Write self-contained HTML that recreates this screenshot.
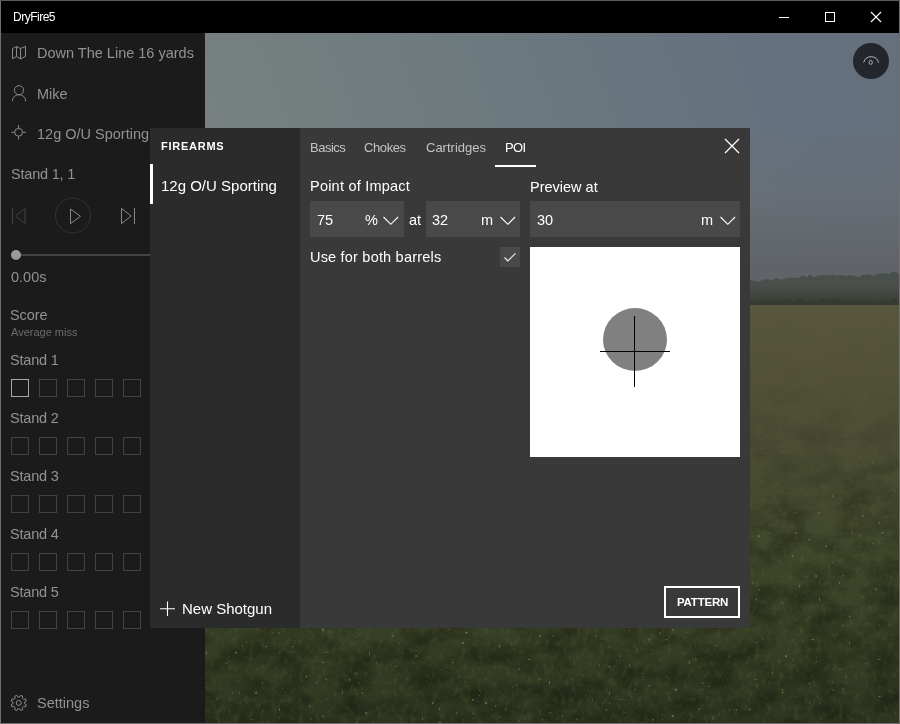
<!DOCTYPE html>
<html><head><meta charset="utf-8">
<style>
*{box-sizing:border-box;margin:0;padding:0}
html,body{width:900px;height:724px;overflow:hidden;background:#6e6e6e}
body{position:relative;font-family:"Liberation Sans",sans-serif;color:#fff}
.a{position:absolute}
.t{position:absolute;white-space:nowrap;line-height:1;will-change:transform}
.sb{color:#929292;font-size:14.5px}
.box{position:absolute;width:18px;height:18px;border:1px solid #424242}
.tab{position:absolute;top:141px;font-size:13px;color:#c4c4c4}
.inp{position:absolute;top:201px;height:36px;background:#494949}
svg{position:absolute;overflow:visible}
</style></head><body>
<!-- window frame -->
<div class="a" style="left:0;top:0;width:900px;height:724px;background:#707070"></div>
<div class="a" style="left:0;top:0;width:900px;height:1px;background:#5a5a5a"></div>
<!-- photo -->
<div class="a" id="photo" style="left:205px;top:33px;width:694px;height:690px;overflow:hidden">
  <div class="a" style="left:0;top:0;width:694px;height:272px;background:linear-gradient(70deg,#7a8381 0%,#778080 12%,#6c797e 47%,#64707e 85%,#65707c 100%)"></div>
  <div class="a" style="left:0;top:0;width:694px;height:272px;background:linear-gradient(to bottom,rgba(110,114,118,0) 95px,rgba(104,108,112,.55) 160px,rgba(96,100,104,1) 235px)"></div>
  <svg width="694" height="80" style="left:0;top:202px" viewBox="0 0 694 80">
    <defs><filter id="tb" x="-5%" y="-20%" width="110%" height="140%"><feGaussianBlur stdDeviation="0.7"/></filter><linearGradient id="tg" x1="0" y1="0" x2="0" y2="1"><stop offset="0.4" stop-color="#4a4f4b"/><stop offset="0.7" stop-color="#3f443c"/><stop offset="0.9" stop-color="#383d33"/><stop offset="1" stop-color="#40443a"/></linearGradient></defs>
    <path d="M0,72 L0,48 L540,47 Q546.6,43.4 553.2,47.2 Q560.0,42.4 566.7,45.6 Q571.2,41.5 575.6,44.7 Q585.0,41.5 594.3,43.0 Q598.1,38.3 601.8,42.5 Q605.1,37.1 608.5,42.3 Q616.7,38.0 624.9,40.8 Q628.0,38.4 631.2,40.8 Q635.7,39.3 640.2,40.9 Q646.9,38.9 653.6,42.2 Q660.8,37.3 667.9,40.7 Q676.2,36.3 684.5,38.9 Q689.3,34.0 694.0,39.0 L694,72 Z" fill="url(#tg)" filter="url(#tb)"/>
    <path d="M540,72 L540,66 Q545.3,63.7 550.6,67.6 Q557.3,63.7 564.1,67.8 Q566.7,62.3 569.3,67.9 Q574.8,64.5 580.2,66.2 Q584.8,61.2 589.4,67.1 Q594.5,60.1 599.6,66.4 Q603.3,64.6 607.1,67.5 Q610.3,64.0 613.5,66.3 Q618.8,60.6 624.1,66.0 Q630.5,61.0 636.9,66.4 Q643.8,64.4 650.8,66.6 Q657.6,62.7 664.4,67.4 Q667.8,64.7 671.3,67.4 Q678.1,64.5 685.0,66.6 Q689.1,60.8 693.2,66.3 Q693.6,61.5 694.0,67.2 L694,72 Z" fill="#343830" opacity="0.7" filter="url(#tb)"/>
  </svg>
  <div class="a" style="left:0;top:272px;width:694px;height:418px;background:linear-gradient(to bottom,#58573d 0px,#535239 75px,#4c4d34 135px,#454a2f 195px,#3e462a 255px,#353e24 345px,#2d3520 418px)"></div>
  <svg width="694" height="419" style="left:0;top:272px">
    <defs>
      <filter id="gr" x="0" y="0" width="100%" height="100%" color-interpolation-filters="sRGB">
        <feTurbulence type="fractalNoise" baseFrequency="0.03 0.05" numOctaves="4" seed="4"/>
        <feColorMatrix type="matrix" values="0 0 0 0 0.1  0 0 0 0 0.11  0 0 0 0 0.06  -2.5 0 0 0 1.6"/>
      </filter>
      <filter id="bl" x="0" y="0" width="100%" height="100%" color-interpolation-filters="sRGB">
        <feTurbulence type="fractalNoise" baseFrequency="0.18 0.12" numOctaves="3" seed="7"/>
        <feColorMatrix type="matrix" values="0 0 0 0 0.42  0 0 0 0 0.5  0 0 0 0 0.26  3.5 0 0 0 -1.8"/>
      </filter>
      <filter id="sp" x="0" y="0" width="100%" height="100%" color-interpolation-filters="sRGB">
        <feTurbulence type="fractalNoise" baseFrequency="0.3" numOctaves="1" seed="9"/>
        <feColorMatrix type="matrix" values="0 0 0 0 0.75  0 0 0 0 0.76  0 0 0 0 0.6  14 0 0 0 -9.9"/>
      </filter>
      <linearGradient id="fm" x1="0" y1="0" x2="0" y2="1"><stop offset="0" stop-color="#fff" stop-opacity="0"/><stop offset="0.25" stop-color="#fff" stop-opacity="0.12"/><stop offset="0.55" stop-color="#fff" stop-opacity="0.65"/><stop offset="1" stop-color="#fff" stop-opacity="1"/></linearGradient>
      <mask id="mk"><rect width="694" height="419" fill="url(#fm)"/></mask>
    </defs>
    <g mask="url(#mk)">
      <rect width="694" height="419" filter="url(#gr)" opacity="0.62"/>
      <rect width="694" height="419" filter="url(#bl)" opacity="0.18"/>
      <rect width="694" height="419" filter="url(#sp)" opacity="0.4"/>
    </g>
  </svg>
</div>
<!-- title bar -->
<div class="a" style="left:1px;top:1px;width:898px;height:32px;background:#000"></div>
<div class="t" style="left:13px;top:11px;font-size:12px;color:#fff;letter-spacing:-0.5px">DryFire5</div>
<div class="a" style="left:779px;top:17px;width:10px;height:1px;background:#fff"></div>
<div class="a" style="left:825px;top:12px;width:10px;height:10px;border:1px solid #fff"></div>
<svg width="12" height="12" style="left:870px;top:11px" viewBox="0 0 12 12"><path d="M1,1 L11,11 M11,1 L1,11" stroke="#fff" stroke-width="1.1"/></svg>
<!-- round button -->
<div class="a" style="left:853px;top:43px;width:36px;height:36px;border-radius:50%;background:#23262c"></div>
<svg width="36" height="36" style="left:853px;top:43px" viewBox="0 0 36 36"><path d="M10.7,19.6 A7.6,7.6 0 0 1 25.5,19.6" fill="none" stroke="#b4b4b4" stroke-width="1"/><ellipse cx="17.7" cy="19.4" rx="1.6" ry="2.0" fill="none" stroke="#b4b4b4" stroke-width="0.95"/></svg>
<!-- sidebar -->
<div class="a" style="left:1px;top:33px;width:204px;height:690px;background:#1b1b1b"></div>
<svg width="30" height="20" style="left:0;top:40px" viewBox="0 40 30 20"><path d="M12.5,48.6 L16.5,46.5 L20.5,48.6 L25.5,46.3 L25.5,56.5 L20.5,58.9 L16.5,56.5 L12.5,58.7 Z M16.5,46.5 V56.5 M20.5,48.6 V58.9" fill="none" stroke="#8a8a8a" stroke-width="1" stroke-linejoin="round"/></svg>
<div class="t sb" style="left:37px;top:46.4px">Down The Line 16 yards</div>
<svg width="30" height="20" style="left:0;top:82px" viewBox="0 82 30 20"><circle cx="19" cy="90.2" r="4.6" fill="none" stroke="#8a8a8a" stroke-width="1"/><path d="M12.3,101.2 A6.7,6.6 0 0 1 25.7,101.2" fill="none" stroke="#8a8a8a" stroke-width="1"/></svg>
<div class="t sb" style="left:37px;top:86.5px">Mike</div>
<svg width="30" height="20" style="left:0;top:122px" viewBox="0 122 30 20"><circle cx="18.6" cy="132.3" r="3.9" fill="none" stroke="#8a8a8a" stroke-width="1"/><path d="M11.3,132.3 H14.7 M22.5,132.3 H25.9 M18.6,125 V128.4 M18.6,136.2 V139.6" stroke="#8a8a8a" stroke-width="1"/></svg>
<div class="t sb" style="left:37px;top:126.7px">12g O/U Sporting</div>
<div class="t sb" style="left:10.5px;top:166.7px;letter-spacing:-0.2px">Stand 1, 1</div>
<!-- player -->
<svg width="160" height="50" style="left:0;top:190px" viewBox="0 190 160 50">
  <path d="M12.5,208 V224 M25,208.5 L15.5,216 L25,223.5Z" fill="none" stroke="#444" stroke-width="1"/>
  <circle cx="73" cy="215.5" r="17.5" fill="none" stroke="#333" stroke-width="1"/>
  <path d="M70.5,209 L80.5,216.3 L70.5,223.6Z" fill="none" stroke="#8a8a8a" stroke-width="1"/>
  <path d="M121.5,208.5 L131.2,216 L121.5,223.5Z M134.5,208 V224" fill="none" stroke="#8a8a8a" stroke-width="1"/>
</svg>
<div class="a" style="left:16px;top:254px;width:134px;height:2px;background:#424242"></div>
<div class="a" style="left:11px;top:250px;width:10px;height:10px;border-radius:50%;background:#9a9a9a"></div>
<div class="t sb" style="left:11px;top:269.6px">0.00s</div>
<div class="t sb" style="left:10.2px;top:307.6px;letter-spacing:-0.1px">Score</div>
<div class="t" style="left:11px;top:326.6px;font-size:11px;color:#6c6c6c">Average miss</div>
<div id="stands"></div>
<div class="t sb" style="left:10.3px;top:352.6px;letter-spacing:-0.2px">Stand 1</div>
<div class="t sb" style="left:10.3px;top:410.6px;letter-spacing:-0.2px">Stand 2</div>
<div class="t sb" style="left:10.3px;top:468.6px;letter-spacing:-0.2px">Stand 3</div>
<div class="t sb" style="left:10.3px;top:526.6px;letter-spacing:-0.2px">Stand 4</div>
<div class="t sb" style="left:10.3px;top:584.6px;letter-spacing:-0.2px">Stand 5</div>
<div class="box" style="left:11px;top:379px;border-color:#a8a8a8"></div><div class="box" style="left:39px;top:379px"></div><div class="box" style="left:67px;top:379px"></div><div class="box" style="left:95px;top:379px"></div><div class="box" style="left:123px;top:379px"></div>
<div class="box" style="left:11px;top:437px"></div><div class="box" style="left:39px;top:437px"></div><div class="box" style="left:67px;top:437px"></div><div class="box" style="left:95px;top:437px"></div><div class="box" style="left:123px;top:437px"></div>
<div class="box" style="left:11px;top:495px"></div><div class="box" style="left:39px;top:495px"></div><div class="box" style="left:67px;top:495px"></div><div class="box" style="left:95px;top:495px"></div><div class="box" style="left:123px;top:495px"></div>
<div class="box" style="left:11px;top:553px"></div><div class="box" style="left:39px;top:553px"></div><div class="box" style="left:67px;top:553px"></div><div class="box" style="left:95px;top:553px"></div><div class="box" style="left:123px;top:553px"></div>
<div class="box" style="left:11px;top:611px"></div><div class="box" style="left:39px;top:611px"></div><div class="box" style="left:67px;top:611px"></div><div class="box" style="left:95px;top:611px"></div><div class="box" style="left:123px;top:611px"></div>
<svg width="20" height="20" style="left:9px;top:693px" viewBox="-9.75 -9.9 20 20"><path d="M7.57,1.88 L6.68,4.02 L4.75,3.51 L3.51,4.75 L4.02,6.68 L1.88,7.57 L0.88,5.83 L-0.88,5.83 L-1.88,7.57 L-4.02,6.68 L-3.51,4.75 L-4.75,3.51 L-6.68,4.02 L-7.57,1.88 L-5.83,0.88 L-5.83,-0.88 L-7.57,-1.88 L-6.68,-4.02 L-4.75,-3.51 L-3.51,-4.75 L-4.02,-6.68 L-1.88,-7.57 L-0.88,-5.83 L0.88,-5.83 L1.88,-7.57 L4.02,-6.68 L3.51,-4.75 L4.75,-3.51 L6.68,-4.02 L7.57,-1.88 L5.83,-0.88 L5.83,0.88Z" fill="none" stroke="#8a8a8a" stroke-width="1" stroke-linejoin="round"/><circle cx="0" cy="0" r="2.5" fill="none" stroke="#8a8a8a" stroke-width="1"/></svg>
<div class="t sb" style="left:37px;top:696.4px">Settings</div>
<!-- dialog -->
<div class="a" style="left:150px;top:128px;width:600px;height:500px;background:#393939"></div>
<div class="a" style="left:150px;top:128px;width:150px;height:500px;background:#2b2b2b"></div>
<div class="t" style="left:160.5px;top:140.6px;font-size:11px;font-weight:bold;color:#fff;letter-spacing:0.75px">FIREARMS</div>
<div class="a" style="left:150px;top:164px;width:3px;height:40px;background:#fff"></div>
<div class="t" style="left:161px;top:177.9px;font-size:15px;color:#fff">12g O/U Sporting</div>
<svg width="16" height="16" style="left:160px;top:601px" viewBox="0 0 16 16"><path d="M7.5,0.5 V15 M0,7.8 H15" stroke="#fff" stroke-width="1.1"/></svg>
<div class="t" style="left:181.5px;top:601.3px;font-size:15px;color:#fff">New Shotgun</div>
<div class="t tab" style="left:309.5px;letter-spacing:-0.5px">Basics</div>
<div class="t tab" style="left:364px;letter-spacing:-0.4px">Chokes</div>
<div class="t tab" style="left:426px">Cartridges</div>
<div class="t tab" style="left:505px;color:#fff;letter-spacing:-0.6px">POI</div>
<div class="a" style="left:495px;top:165px;width:41px;height:2px;background:#fff"></div>
<svg width="16" height="16" style="left:724px;top:138px" viewBox="0 0 16 16"><path d="M1,1 L15,15 M15,1 L1,15" stroke="#fff" stroke-width="1.3"/></svg>
<div class="t" style="left:310px;top:179.4px;font-size:14.5px;color:#fff;letter-spacing:0.22px">Point of Impact</div>
<div class="t" style="left:530px;top:179.6px;font-size:14.5px;color:#fff">Preview at</div>
<div class="inp" style="left:310px;width:94px"></div>
<div class="inp" style="left:426px;width:94px"></div>
<div class="inp" style="left:530px;width:210px"></div>
<div class="t" style="left:316.5px;top:212.9px;font-size:14.5px;color:#fff">75</div>
<div class="t" style="left:365px;top:212.9px;font-size:14.5px;color:#fff">%</div>
<div class="t" style="left:408.5px;top:212.9px;font-size:14.5px;color:#fff">at</div>
<div class="t" style="left:432px;top:212.9px;font-size:14.5px;color:#fff">32</div>
<div class="t" style="left:481px;top:212.9px;font-size:14.5px;color:#fff">m</div>
<div class="t" style="left:536.5px;top:212.9px;font-size:14.5px;color:#fff">30</div>
<div class="t" style="left:701px;top:212.9px;font-size:14.5px;color:#fff">m</div>
<svg width="16" height="10" style="left:383px;top:216px" viewBox="0 0 16 10"><path d="M0.5,1 L7.8,8.3 L15.1,1" fill="none" stroke="#fff" stroke-width="1.1"/></svg>
<svg width="16" height="10" style="left:500px;top:216px" viewBox="0 0 16 10"><path d="M0.5,1 L7.8,8.3 L15.1,1" fill="none" stroke="#fff" stroke-width="1.1"/></svg>
<svg width="16" height="10" style="left:719.5px;top:216px" viewBox="0 0 16 10"><path d="M0.5,1 L7.8,8.3 L15.1,1" fill="none" stroke="#fff" stroke-width="1.1"/></svg>
<div class="t" style="left:310px;top:250.4px;font-size:14.5px;color:#fff;letter-spacing:0.2px">Use for both barrels</div>
<div class="a" style="left:500px;top:247px;width:20px;height:20px;background:#494949"></div>
<svg width="20" height="20" style="left:500px;top:247px" viewBox="0 0 20 20"><path d="M4.5,10.5 L7.8,14 L15.5,6.3" fill="none" stroke="#f2f2f2" stroke-width="1.1"/></svg>
<div class="a" style="left:530px;top:247px;width:210px;height:210px;background:#fff"></div>
<div class="a" style="left:603px;top:308px;width:64px;height:63px;border-radius:50%;background:#808080"></div>
<div class="a" style="left:600px;top:351px;width:70px;height:1px;background:#000"></div>
<div class="a" style="left:634px;top:316px;width:1px;height:71px;background:#000"></div>
<div class="a" style="left:664px;top:586px;width:76px;height:32px;border:2px solid #fff"></div>
<div class="t" style="left:677px;top:596.5px;font-size:11.5px;font-weight:bold;color:#fff;letter-spacing:-0.2px">PATTERN</div>
</body></html>
